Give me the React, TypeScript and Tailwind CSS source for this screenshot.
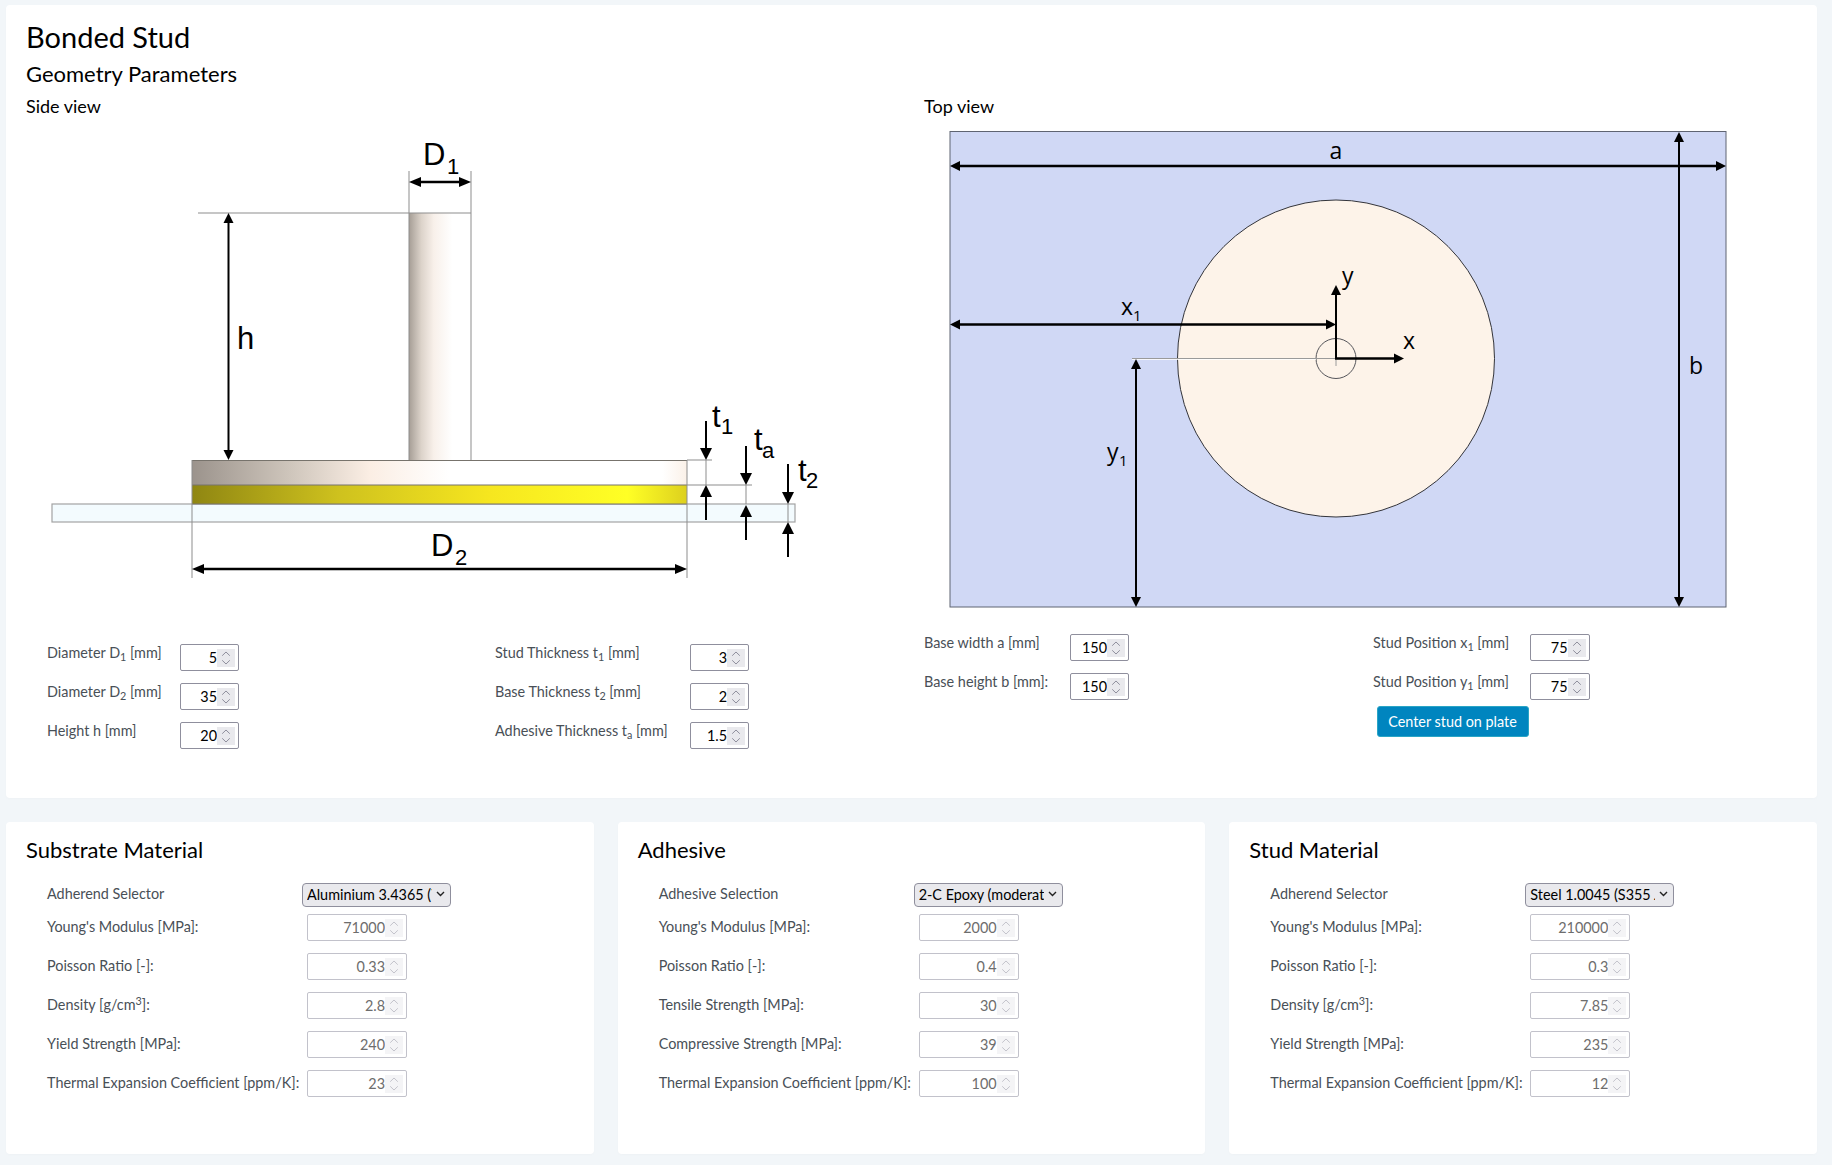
import type { ReactNode } from 'react';

const FONT = 'font-["Lato","Noto_Sans",sans-serif]';

// Spinner drawn by hand: the grey box with the two chevrons next to the value
function Spinner({ disabled }: { disabled?: boolean }) {
  return (
    <span className={`flex h-[18px] w-[18px] flex-none items-center justify-center ${disabled ? 'bg-[#f4f4f6]' : 'bg-[#e9e9ed]'}`}>
      <svg width="18" height="18" viewBox="0 0 18 18" fill="none" stroke={disabled ? '#c4c4cc' : '#8f8f9d'} strokeWidth="1">
        <path d="M5.2 6.7 9 3l3.8 3.7" />
        <path d="M5.2 11.3 9 15l3.8-3.7" />
      </svg>
    </span>
  );
}

function NumberField({ value, width, disabled }: { value: string; width: string; disabled?: boolean }) {
  return (
    <div className={`flex h-[27px] flex-none items-center rounded-[2px] border pr-[3px] ${width} ${disabled ? 'border-[#c2c2cb] text-[#6d6d6d]' : 'border-[#8f8f9d] text-black'}`}>
      <input
        type="text"
        defaultValue={value}
        disabled={disabled}
        className="w-full min-w-0 bg-transparent text-right text-[14.4px] outline-none"
      />
      <Spinner disabled={disabled} />
    </div>
  );
}

function GeoRow({ label, value, labelWidth, width }: { label: ReactNode; value: string; labelWidth: string; width: string }) {
  return (
    <div className="flex items-start">
      <label className={`mt-[-1px] flex-none text-[14.4px] leading-[20px] text-[#495057] ${labelWidth}`}>{label}</label>
      <NumberField value={value} width={width} />
    </div>
  );
}

function Arrow({ x1, y1, x2, y2, sw = 2, head = 10, half = 5 }: { x1: number; y1: number; x2: number; y2: number; sw?: number; head?: number; half?: number }) {
  // head sits on the (x2, y2) end
  const len = Math.hypot(x2 - x1, y2 - y1);
  const ux = (x2 - x1) / len;
  const uy = (y2 - y1) / len;
  const bx = x2 - ux * head;
  const by = y2 - uy * head;
  return (
    <g>
      <line x1={x1} y1={y1} x2={bx} y2={by} stroke="black" strokeWidth={sw} />
      <polygon points={`${x2},${y2} ${bx - uy * half},${by + ux * half} ${bx + uy * half},${by - ux * half}`} fill="black" />
    </g>
  );
}

function Sub({ x, y, sx, sy, main, sub }: { x: number; y: number; sx: number; sy: number; main: string; sub: string }) {
  return (
    <g fontFamily='"Liberation Sans", sans-serif' fill="black">
      <text x={x} y={y} fontSize="31">{main}</text>
      <text x={sx} y={sy} fontSize="22">{sub}</text>
    </g>
  );
}

function SideView() {
  return (
    <svg width="880" height="518" viewBox="26 116 880 518" className="block">
      <defs>
        <linearGradient id="stud" x1="0" x2="1" y1="0" y2="0">
          <stop offset="0" stopColor="#a69e96" />
          <stop offset="0.2" stopColor="#dcd3ca" />
          <stop offset="0.4" stopColor="#f8f0ea" />
          <stop offset="0.7" stopColor="#ffffff" />
          <stop offset="1" stopColor="#ffffff" />
        </linearGradient>
        <linearGradient id="base" x1="0" x2="1" y1="0" y2="0">
          <stop offset="0" stopColor="#9b938c" />
          <stop offset="0.2" stopColor="#cfc6bc" />
          <stop offset="0.36" stopColor="#fbeee4" />
          <stop offset="0.52" stopColor="#ffffff" />
          <stop offset="0.95" stopColor="#ffffff" />
          <stop offset="1" stopColor="#fbf1e8" />
        </linearGradient>
        <linearGradient id="glue" x1="0" x2="1" y1="0" y2="0">
          <stop offset="0" stopColor="#8f8612" />
          <stop offset="0.3" stopColor="#cfc21e" />
          <stop offset="0.6" stopColor="#f6e61f" />
          <stop offset="0.88" stopColor="#ffff25" />
          <stop offset="1" stopColor="#ddd01e" />
        </linearGradient>
      </defs>

      {/* plate, adhesive, base, stud */}
      <rect x="52" y="504" width="743" height="18" fill="#f3fbfe" stroke="#a3a3a3" strokeWidth="1.2" />
      <rect x="192" y="485" width="495" height="19" fill="url(#glue)" />
      <rect x="192" y="460" width="495" height="25" fill="url(#base)" />
      <rect x="409" y="213" width="62" height="247" fill="url(#stud)" />
      <path d="M192 460.5H687M192 485H687M192 504H687" stroke="#77736c" strokeWidth="1" fill="none" />
      <path d="M409 171V460M471 171V460" stroke="#8d8d8d" strokeWidth="1" fill="none" />
      <path d="M198 213H471" stroke="#8d8d8d" strokeWidth="1.2" fill="none" />
      <path d="M192 460V578M687 460V578" stroke="#8d8d8d" strokeWidth="1" fill="none" />
      <path d="M687 460H712M687 485H752M706 460V485M746 485V504M788 504V522" stroke="#8d8d8d" strokeWidth="1" fill="none" />

      {/* dimensions */}
      <Arrow x1={440} y1={182} x2={409} y2={182} sw={2.5} head={12} />
      <Arrow x1={440} y1={182} x2={471} y2={182} sw={2.5} head={12} />
      <Arrow x1={228.5} y1={340} x2={228.5} y2={213} />
      <Arrow x1={228.5} y1={340} x2={228.5} y2={460} />
      <Arrow x1={440} y1={569} x2={192} y2={569} sw={2.5} head={12} />
      <Arrow x1={440} y1={569} x2={687} y2={569} sw={2.5} head={12} />
      <Arrow x1={706} y1={421} x2={706} y2={460} head={12} half={6} />
      <Arrow x1={706} y1={520} x2={706} y2={485} head={12} half={6} />
      <Arrow x1={746} y1={446} x2={746} y2={485} head={12} half={6} />
      <Arrow x1={746} y1={540} x2={746} y2={505} head={12} half={6} />
      <Arrow x1={788} y1={464} x2={788} y2={504} head={12} half={6} />
      <Arrow x1={788} y1={557} x2={788} y2={522} head={12} half={6} />

      {/* labels */}
      <Sub x={423} y={165} sx={447} sy={174} main="D" sub="1" />
      <Sub x={431} y={556} sx={455} sy={565} main="D" sub="2" />
      <text x={237} y={349} fontSize="31" fontFamily='"Liberation Sans", sans-serif'>h</text>
      <Sub x={712} y={427} sx={721} sy={434} main="t" sub="1" />
      <Sub x={754} y={450} sx={762} sy={458} main="t" sub="a" />
      <Sub x={798} y={481} sx={806} sy={488} main="t" sub="2" />
    </svg>
  );
}

function TopView() {
  return (
    <svg width="880" height="508" viewBox="924 116 880 508" className="block">
      <rect x="950" y="131.5" width="776" height="475.5" fill="#d0d8f5" stroke="#5f6472" strokeWidth="1" />
      <circle cx="1336" cy="358.5" r="158.5" fill="#fdf3e9" stroke="#33343a" strokeWidth="1" />
      <circle cx="1336" cy="358.5" r="20" fill="none" stroke="#55555a" strokeWidth="1" />
      <path d="M1132 358.5H1336V366" stroke="#9a9a9a" strokeWidth="1" fill="none" />
      <path d="M1132 359.5H1316" stroke="#ffffff" strokeWidth="1" fill="none" opacity="0.8" />

      <Arrow x1={1336} y1={166} x2={950} y2={166} sw={2.5} />
      <Arrow x1={1336} y1={166} x2={1726} y2={166} sw={2.5} />
      <Arrow x1={1679} y1={370} x2={1679} y2={132} />
      <Arrow x1={1679} y1={370} x2={1679} y2={607} />
      <Arrow x1={1200} y1={324.5} x2={950} y2={324.5} sw={2.5} />
      <Arrow x1={1200} y1={324.5} x2={1336} y2={324.5} sw={2.5} />
      <Arrow x1={1136} y1={480} x2={1136} y2={359} />
      <Arrow x1={1136} y1={480} x2={1136} y2={607} />
      <Arrow x1={1336} y1={358.5} x2={1336} y2={285} />
      <Arrow x1={1335} y1={358.5} x2={1404} y2={358.5} sw={2.5} />

      <g fontFamily='"Open Sans", sans-serif' fill="black" fontSize="23">
        <text x={1336} y={159} textAnchor="middle">a</text>
        <text x={1689} y={374}>b</text>
        <text x={1403} y={349}>x</text>
        <text x={1342} y={284}>y</text>
        <text x={1121} y={315}>x</text>
        <text x={1133} y={321} fontSize="15">1</text>
        <text x={1107} y={460}>y</text>
        <text x={1119} y={466} fontSize="15">1</text>
      </g>
    </svg>
  );
}

function MaterialRow({ label, value }: { label: ReactNode; value: string }) {
  return (
    <div className="flex items-center">
      <label className="w-[260px] flex-none pb-[1px] text-[14.4px] text-[#495057]">{label}</label>
      <NumberField value={value} width="w-[100px]" disabled />
    </div>
  );
}

function MaterialCard({ title, selectLabel, selected, rows }: { title: string; selectLabel: string; selected: string; rows: [ReactNode, string][] }) {
  return (
    <section className="h-[332px] rounded-[4px] bg-white pl-[20px] pt-[15px] shadow-[0_1px_3px_rgba(0,0,0,0.02)]">
      <h2 className="text-[22px] leading-[26px] text-black">{title}</h2>
      <div className="mt-[19px] flex flex-col gap-[12px] pl-[21px]">
        <div className="mb-[-4.5px] flex items-center">
          <label className="w-[255px] flex-none text-[14.4px] text-[#495057]">{selectLabel}</label>
          <span className="relative block h-[24.5px] w-[149px]">
            <select className="h-full w-full appearance-none rounded-[4px] border border-[#8f8f9d] bg-[#e9e9ed] pl-[4px] pr-[18px] text-[14.4px] text-black outline-none">
              <option>{selected}</option>
            </select>
            <svg className="pointer-events-none absolute right-[6px] top-[9px]" width="9" height="6" viewBox="0 0 9 6" fill="none" stroke="#222" strokeWidth="1.4">
              <path d="M1 1l3.5 3.5L8 1" />
            </svg>
          </span>
        </div>
        {rows.map(([label, value], i) => (
          <MaterialRow key={i} label={label} value={value} />
        ))}
      </div>
    </section>
  );
}

export default function App() {
  return (
    <div className={`min-h-[1165px] bg-[#f2f6f9] pb-[11px] pl-[6px] pr-[15px] pt-[5px] ${FONT}`}>
      <section className="h-[793px] rounded-[4px] bg-white pl-[20px] pt-[14px] shadow-[0_1px_3px_rgba(0,0,0,0.02)]">
        <h1 className="text-[29px] leading-[35px] text-black">Bonded Stud</h1>
        <h2 className="mt-[8px] text-[22px] leading-[24px] text-black">Geometry Parameters</h2>
        <div className="mt-[10px] flex">
          <div className="w-[898px] flex-none">
            <h3 className="text-[18px] leading-[20px] text-black">Side view</h3>
            <SideView />
            <div className="mt-[10px] grid grid-cols-[448px_1fr] pl-[21px]">
              <div className="flex flex-col gap-[12px]">
                <GeoRow label={<>Diameter D<sub>1</sub> [mm]</>} value="5" labelWidth="w-[133px]" width="w-[59px]" />
                <GeoRow label={<>Diameter D<sub>2</sub> [mm]</>} value="35" labelWidth="w-[133px]" width="w-[59px]" />
                <GeoRow label="Height h [mm]" value="20" labelWidth="w-[133px]" width="w-[59px]" />
              </div>
              <div className="flex flex-col gap-[12px]">
                <GeoRow label={<>Stud Thickness t<sub>1</sub> [mm]</>} value="3" labelWidth="w-[195px]" width="w-[59px]" />
                <GeoRow label={<>Base Thickness t<sub>2</sub> [mm]</>} value="2" labelWidth="w-[195px]" width="w-[59px]" />
                <GeoRow label={<>Adhesive Thickness t<sub>a</sub> [mm]</>} value="1.5" labelWidth="w-[195px]" width="w-[59px]" />
              </div>
            </div>
          </div>
          <div className="flex-1">
            <h3 className="text-[18px] leading-[20px] text-black">Top view</h3>
            <TopView />
            <div className="mt-[10px] grid grid-cols-[449px_1fr]">
              <div className="flex flex-col gap-[12px]">
                <GeoRow label="Base width a [mm]" value="150" labelWidth="w-[146px]" width="w-[59px]" />
                <GeoRow label="Base height b [mm]:" value="150" labelWidth="w-[146px]" width="w-[59px]" />
              </div>
              <div className="flex flex-col gap-[12px]">
                <GeoRow label={<>Stud Position x<sub>1</sub> [mm]</>} value="75" labelWidth="w-[156.5px]" width="w-[60px]" />
                <GeoRow label={<>Stud Position y<sub>1</sub> [mm]</>} value="75" labelWidth="w-[156.5px]" width="w-[60px]" />
                <button className="ml-[3.5px] mt-[-6px] h-[31px] w-[152px] rounded-[3px] border border-[#2aa5c5] bg-[#0085bf] text-[14.4px] text-white">
                  Center stud on plate
                </button>
              </div>
            </div>
          </div>
        </div>
      </section>

      <div className="mt-[24px] grid grid-cols-3 gap-[24px]">
        <MaterialCard
          title="Substrate Material"
          selectLabel="Adherend Selector"
          selected="Aluminium 3.4365 (7075-T6)"
          rows={[
            ["Young's Modulus [MPa]:", '71000'],
            ['Poisson Ratio [-]:', '0.33'],
            [<>Density [g/cm<sup>3</sup>]:</>, '2.8'],
            ['Yield Strength [MPa]:', '240'],
            ['Thermal Expansion Coefficient [ppm/K]:', '23'],
          ]}
        />
        <MaterialCard
          title="Adhesive"
          selectLabel="Adhesive Selection"
          selected="2-C Epoxy (moderate strength)"
          rows={[
            ["Young's Modulus [MPa]:", '2000'],
            ['Poisson Ratio [-]:', '0.4'],
            ['Tensile Strength [MPa]:', '30'],
            ['Compressive Strength [MPa]:', '39'],
            ['Thermal Expansion Coefficient [ppm/K]:', '100'],
          ]}
        />
        <MaterialCard
          title="Stud Material"
          selectLabel="Adherend Selector"
          selected="Steel 1.0045 (S355 JR)"
          rows={[
            ["Young's Modulus [MPa]:", '210000'],
            ['Poisson Ratio [-]:', '0.3'],
            [<>Density [g/cm<sup>3</sup>]:</>, '7.85'],
            ['Yield Strength [MPa]:', '235'],
            ['Thermal Expansion Coefficient [ppm/K]:', '12'],
          ]}
        />
      </div>
    </div>
  );
}
